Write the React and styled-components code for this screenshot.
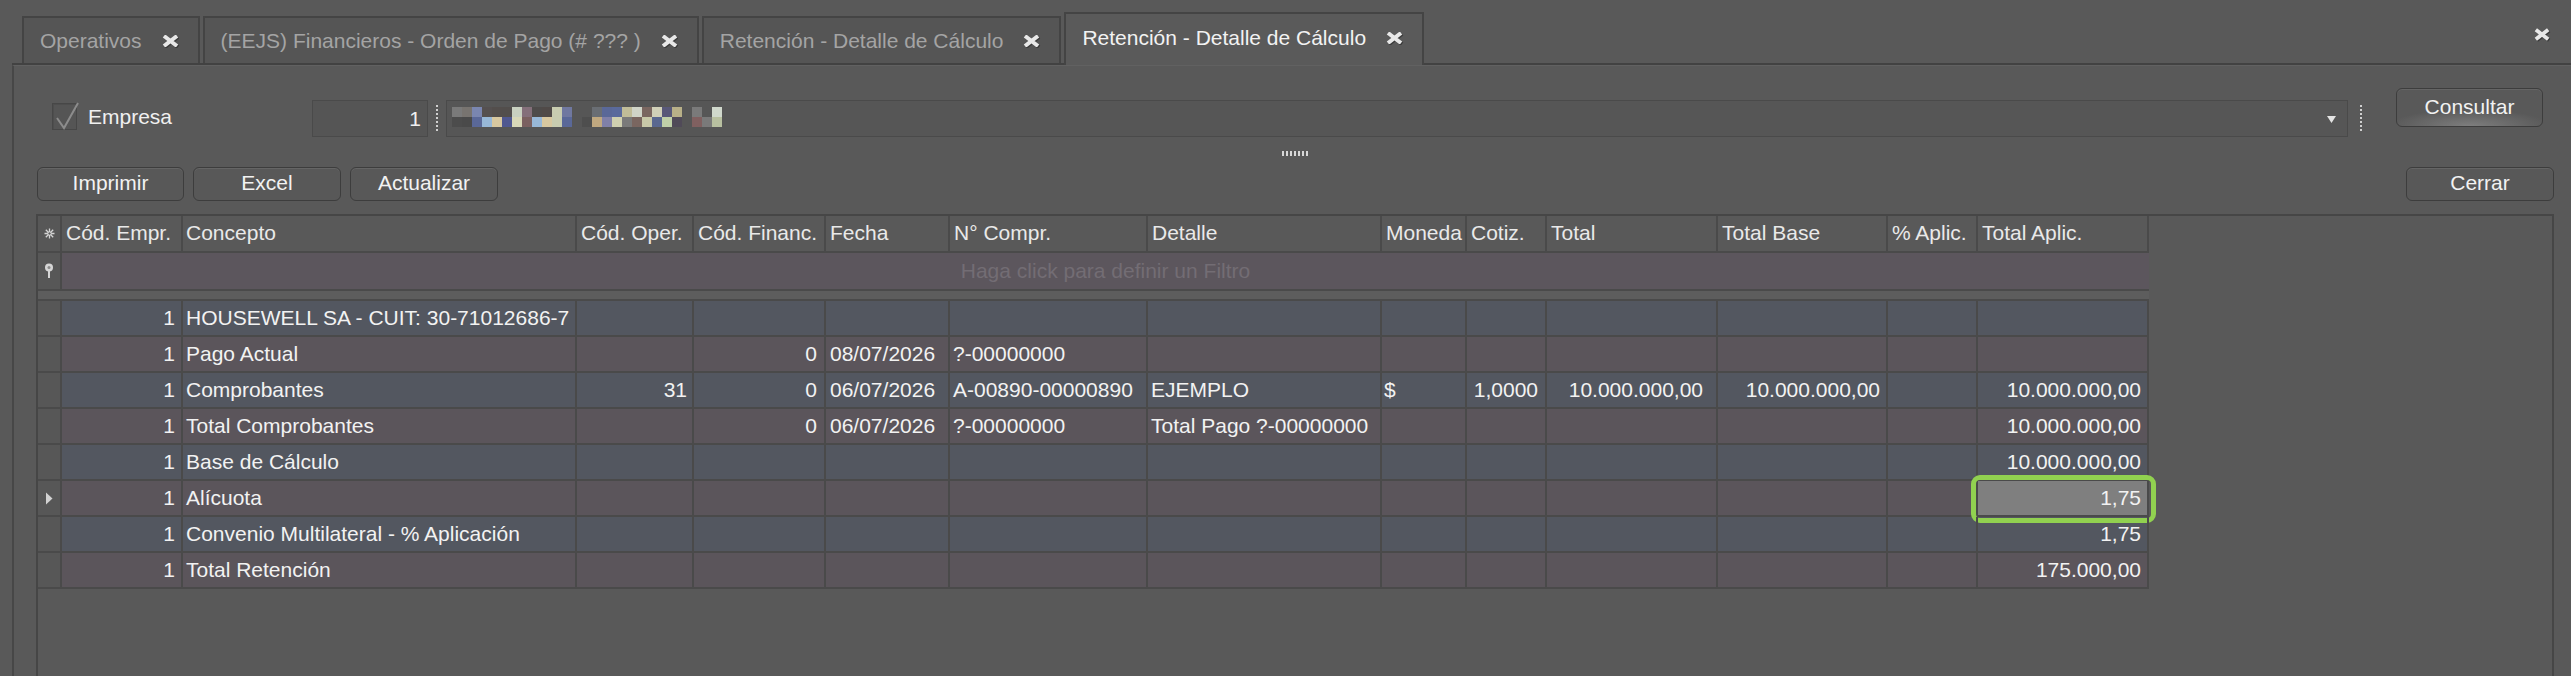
import React from "react";
import styled, { createGlobalStyle, css } from "styled-components";

const Global = createGlobalStyle`
  html, body { margin: 0; padding: 0; background: #595959; overflow: hidden; }
  body { font-family: "Liberation Sans", Arial, sans-serif; font-size: 21px; color: #f0f0f0; }
  * { box-sizing: border-box; }
`;

const Window = styled.div`
  width: 2571px;
  height: 676px;
  display: flex;
  flex-direction: column;
  background: #595959;
`;

const TabBar = styled.div`
  display: flex;
  align-items: flex-end;
  height: 65px;
  margin-left: 12px;
  padding-left: 10px;
  border-bottom: 2px solid #424242;
  flex-shrink: 0;
`;

const Tab = styled.div`
  position: relative;
  display: flex;
  align-items: center;
  gap: 19px;
  height: 47px;
  padding: 0 18px 0 16px;
  margin-right: 3px;
  background: #555555;
  border: 2px solid #444444;
  border-bottom: none;
  color: #a4a4a4;
  white-space: nowrap;
  ${(p) =>
    p.$active &&
    css`
      height: 53px;
      margin-bottom: -2px;
      background: #5a5a5a;
      color: #f2f2f2;
      padding-bottom: 4px;
    `}
`;

const XIcon = styled.svg`
  flex-shrink: 0;
  filter: drop-shadow(1px 1px 0 #3a3a3a);
`;

const WinClose = styled.div`
  margin-left: auto;
  align-self: flex-start;
  margin-top: 22px;
  margin-right: 20px;
`;

const Panel = styled.div`
  flex: 1;
  margin-left: 12px;
  border-left: 2px solid #474747;
  border-top: 1px solid #616161;
  display: flex;
  flex-direction: column;
  min-height: 0;
`;

const FilterRow = styled.div`
  display: flex;
  align-items: flex-start;
  margin-top: 22px;
  padding-left: 38px;
  padding-right: 28px;
`;

const CheckGroup = styled.label`
  width: 260px;
  height: 27px;
  margin-top: 15px;
  display: flex;
  align-items: center;
  gap: 11px;
  color: #f0f0f0;
`;

const CheckBox = styled.span`
  position: relative;
  width: 25px;
  height: 27px;
  border: 1px solid #474747;
  background: #555555;
  box-shadow: inset 1px 1px 0 #4e4e4e;
  flex-shrink: 0;
`;

const CheckMark = styled.svg`
  position: absolute;
  left: 1px;
  top: -3px;
`;

const CodeInput = styled.div`
  width: 116px;
  height: 37px;
  margin-top: 12px;
  background: #555555;
  border: 1px solid #4a4a4a;
  display: flex;
  align-items: center;
  justify-content: flex-end;
  padding-right: 6px;
`;

const Dots = styled.div`
  width: 2px;
  height: 27px;
  margin-top: 17px;
  margin-left: ${(p) => p.$ml}px;
  margin-right: ${(p) => p.$mr}px;
  background-image: linear-gradient(#d0d0d0 50%, transparent 50%);
  background-size: 2px 4px;
`;

const TextField = styled.div`
  position: relative;
  flex: 1;
  height: 37px;
  margin-top: 12px;
  background: #565656;
  border: 1px solid #4a4a4a;
`;

const Mosaic = styled.div`
  position: absolute;
  left: 5px;
  top: 6px;
  display: grid;
  grid-template-columns: repeat(27, 10px);
  grid-auto-rows: 10px;
`;

const Block = styled.span`
  background: ${(p) => p.$c};
`;

const DropArrow = styled.svg`
  position: absolute;
  right: 11px;
  top: 15px;
`;

const Button = styled.button`
  width: ${(p) => p.$w || 148}px;
  height: ${(p) => p.$h || 34}px;
  margin-left: ${(p) => (p.$auto ? "auto" : "0")};
  flex-shrink: 0;
  font-family: "Liberation Sans", Arial, sans-serif;
  font-size: 21px;
  color: #f2f2f2;
  border: 1px solid #3d3d3d;
  border-radius: 6px;
  background: ${(p) =>
    p.$glow
      ? "radial-gradient(ellipse 55% 45% at 50% 100%, #7e7e7e 0%, rgba(90,90,90,0) 100%), #595959"
      : "#585858"};
  box-shadow: inset 0 1px 0 #656565;
  padding: 0 0 2px;
  cursor: default;
`;

const GripRow = styled.div`
  display: flex;
  justify-content: center;
  height: 5px;
  margin-top: 14px;
  padding-left: 7px;
`;

const Grip = styled.div`
  width: 28px;
  height: 5px;
  background-image: linear-gradient(90deg, #d8d8d8 50%, transparent 50%);
  background-size: 4px 5px;
`;

const ButtonRow = styled.div`
  display: flex;
  align-items: center;
  gap: 9px;
  margin-top: 11px;
  padding-left: 23px;
  padding-right: 17px;
`;

const Grid = styled.div`
  flex: 1;
  margin: 13px 17px 0 22px;
  border: 2px solid #464646;
  border-bottom: none;
  background: #595959;
  min-height: 0;
`;

const COLS = [24, 121, 394, 117, 132, 124, 198, 234, 85, 80, 171, 170, 90, 171];

const Row = styled.div`
  display: grid;
  grid-template-columns: ${COLS.map((c) => c + "px").join(" ")};
  width: ${COLS.reduce((a, b) => a + b, 0)}px;
  height: ${(p) => p.$h}px;
  background: ${(p) => p.$bg};
`;

const Cell = styled.div`
  position: relative;
  display: flex;
  align-items: center;
  justify-content: ${(p) => (p.$right ? "flex-end" : "flex-start")};
  padding: 0 ${(p) => (p.$right ? p.$pr ?? 6 : 4)}px 1px ${(p) => (p.$right ? 0 : p.$pl ?? 4)}px;
  border-right: 2px solid #4a4a4a;
  border-bottom: 2px solid #4a4a4a;
  white-space: nowrap;
  overflow: visible;
  background: ${(p) => (p.$sel ? "#7f7f7f" : "transparent")};
  color: ${(p) => (p.$head ? "#e9e9e9" : "#f2f2f2")};
`;

const IndCell = styled.div`
  display: flex;
  align-items: center;
  justify-content: center;
  background: #575757;
  border-right: 2px solid #4a4a4a;
  border-bottom: 2px solid #4a4a4a;
`;

const FilterCell = styled.div`
  grid-column: 2 / -1;
  display: flex;
  align-items: center;
  justify-content: center;
  border-bottom: 2px solid #4a4a4a;
  color: #736d74;
`;

const Band = styled.div`
  width: ${COLS.reduce((a, b) => a + b, 0)}px;
  height: 10px;
  background: #5d5d5d;
  border-bottom: 2px solid #4a4a4a;
`;

const Highlight = styled.div`
  position: absolute;
  left: -7px;
  right: -9px;
  top: -6px;
  bottom: -8px;
  border: 5px solid #91d150;
  border-radius: 9px;
  pointer-events: none;
`;

const CloseX = ({ w = 19, h = 12 }) => (
  <XIcon width={w} height={h} viewBox="0 0 19 12">
    <path d="M3 1 L16 11 M16 1 L3 11" stroke="#e8e8e8" strokeWidth="4" fill="none" />
  </XIcon>
);

const M1 = [
  "#7a7a7a", "#787470", "#7a86b0", "#555050", "#534e4c", "#524e4c", "#c8d0c0", "#846f7a", "#4e4b4a",
  "#504a48", "#c8ccb0", "#7078a0", "#565656", "#565656", "#6a6e74", "#5a6898", "#5a6a9c", "#c0bc98",
  "#d0d4c8", "#7a6660", "#d0d0b8", "#585878", "#b8b088", "#565656", "#7a7a7a", "#565656", "#d0d8cc",
];
const M2 = [
  "#4c4c4c", "#4a4a4a", "#5a6898", "#98b8d8", "#d8c8a0", "#505890", "#d8d8b8", "#7a6060", "#98b8d8",
  "#d8c8a0", "#c8ccb0", "#5a6898", "#565656", "#4e4e4e", "#c0a880", "#8080a8", "#d0d0b0", "#7a7a7a",
  "#7a6660", "#c8c8a8", "#5a6890", "#c0d0a8", "#504a58", "#565656", "#806060", "#7a7a7a", "#b8c0a0",
];

const HEADERS = [
  "Cód. Empr.", "Concepto", "Cód. Oper.", "Cód. Financ.", "Fecha", "N° Compr.", "Detalle",
  "Moneda", "Cotiz.", "Total", "Total Base", "% Aplic.", "Total Aplic.",
];

const ALIGN = [
  { right: true, pr: 6 }, { pl: 3 }, { right: true, pr: 5 }, { right: true, pr: 7 }, { pl: 4 },
  { pl: 3 }, { pl: 3 }, { pl: 2 }, { right: true, pr: 7 }, { right: true, pr: 13 },
  { right: true, pr: 6 }, { right: true }, { right: true, pr: 6 },
];

const ROWS = [
  ["1", "HOUSEWELL SA - CUIT: 30-71012686-7", "", "", "", "", "", "", "", "", "", "", ""],
  ["1", "Pago Actual", "", "0", "08/07/2026", "?-00000000", "", "", "", "", "", "", ""],
  ["1", "Comprobantes", "31", "0", "06/07/2026", "A-00890-00000890", "EJEMPLO", "$", "1,0000", "10.000.000,00", "10.000.000,00", "", "10.000.000,00"],
  ["1", "Total Comprobantes", "", "0", "06/07/2026", "?-00000000", "Total Pago ?-00000000", "", "", "", "", "", "10.000.000,00"],
  ["1", "Base de Cálculo", "", "", "", "", "", "", "", "", "", "", "10.000.000,00"],
  ["1", "Alícuota", "", "", "", "", "", "", "", "", "", "", "1,75"],
  ["1", "Convenio Multilateral - % Aplicación", "", "", "", "", "", "", "", "", "", "", "1,75"],
  ["1", "Total Retención", "", "", "", "", "", "", "", "", "", "", "175.000,00"],
];

const SEL_ROW = 5;

const StarIcon = () => (
  <svg width="11" height="11" viewBox="0 0 11 11">
    <g stroke="#d4d4d4" strokeWidth="1.3" fill="none">
      <path d="M5.5 0.5 V10.5 M0.5 5.5 H10.5 M1.8 1.8 L9.2 9.2 M9.2 1.8 L1.8 9.2" />
    </g>
    <circle cx="5.5" cy="5.5" r="1.6" fill="#595959" stroke="#d4d4d4" strokeWidth="1" />
  </svg>
);

const PinIcon = () => (
  <svg width="10" height="16" viewBox="0 0 10 16">
    <circle cx="5" cy="4.5" r="4" fill="#d6d6d6" />
    <circle cx="5" cy="4.5" r="1.5" fill="#8a8a8a" />
    <rect x="4" y="8" width="2" height="7" fill="#d6d6d6" />
  </svg>
);

const RowArrow = () => (
  <svg width="8" height="13" viewBox="0 0 8 13">
    <path d="M1 0.5 L7.5 6.5 L1 12.5 Z" fill="#d2d2d2" />
  </svg>
);

export default function App() {
  return (
    <>
      <Global />
      <Window>
        <TabBar>
          <Tab>
            Operativos <CloseX />
          </Tab>
          <Tab>
            (EEJS) Financieros - Orden de Pago (# ??? ) <CloseX />
          </Tab>
          <Tab>
            Retención - Detalle de Cálculo <CloseX />
          </Tab>
          <Tab $active>
            Retención - Detalle de Cálculo <CloseX />
          </Tab>
          <WinClose>
            <CloseX w={18} h={13} />
          </WinClose>
        </TabBar>
        <Panel>
          <FilterRow>
            <CheckGroup>
              <CheckBox>
                <CheckMark width="26" height="30" viewBox="0 0 26 30">
                  <path d="M3 17 L10 27 L24 2" stroke="#8c8c8c" strokeWidth="2" fill="none" />
                </CheckMark>
              </CheckBox>
              Empresa
            </CheckGroup>
            <CodeInput>1</CodeInput>
            <Dots $ml={8} $mr={8} />
            <TextField>
              <Mosaic>
                {M1.map((c, i) => (
                  <Block key={"a" + i} $c={c} />
                ))}
                {M2.map((c, i) => (
                  <Block key={"b" + i} $c={c} />
                ))}
              </Mosaic>
              <DropArrow width="9" height="7" viewBox="0 0 9 7">
                <path d="M0 0 H9 L4.5 7 Z" fill="#e4e4e4" />
              </DropArrow>
            </TextField>
            <Dots $ml={12} $mr={34} />
            <Button $w={147} $h={39} $glow>
              Consultar
            </Button>
          </FilterRow>
          <GripRow>
            <Grip />
          </GripRow>
          <ButtonRow>
            <Button $w={147}>Imprimir</Button>
            <Button>Excel</Button>
            <Button>Actualizar</Button>
            <Button $auto>Cerrar</Button>
          </ButtonRow>
          <Grid>
            <Row $h={37} $bg="#595959">
              <IndCell>
                <StarIcon />
              </IndCell>
              {HEADERS.map((h) => (
                <Cell key={h} $head $pl={h === "Concepto" ? 3 : 4}>
                  {h}
                </Cell>
              ))}
            </Row>
            <Row $h={38} $bg="#5c565d">
              <IndCell>
                <PinIcon />
              </IndCell>
              <FilterCell>Haga click para definir un Filtro</FilterCell>
            </Row>
            <Band />
            {ROWS.map((r, ri) => (
              <Row key={ri} $h={36} $bg={ri % 2 === 0 ? "#535760" : "#5b555b"}>
                <IndCell>{ri === SEL_ROW && <RowArrow />}</IndCell>
                {r.map((v, ci) => {
                  const a = ALIGN[ci];
                  const sel = ri === SEL_ROW && ci === r.length - 1;
                  return (
                    <Cell key={ci} $right={a.right} $pr={a.pr} $pl={a.pl} $sel={sel}>
                      {v}
                      {sel && <Highlight />}
                    </Cell>
                  );
                })}
              </Row>
            ))}
          </Grid>
        </Panel>
      </Window>
    </>
  );
}
